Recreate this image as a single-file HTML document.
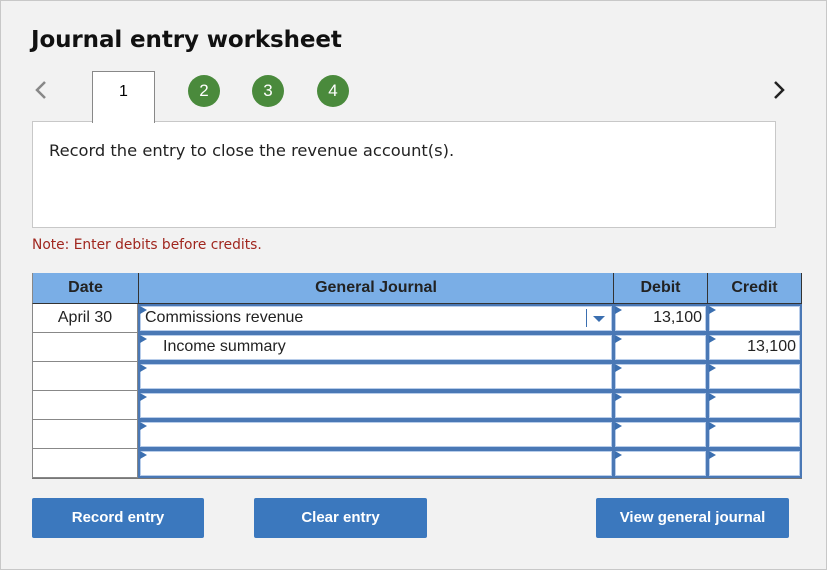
<!DOCTYPE html>
<html><head><style>
*{margin:0;padding:0;box-sizing:border-box}
body{width:827px;height:570px;background:#f2f2f2;font-family:"Liberation Sans",sans-serif;position:relative;overflow:hidden}
.a{position:absolute}
h1{position:absolute;left:31px;top:27px;font-size:23px;font-weight:bold;color:#111;font-family:"DejaVu Sans","Liberation Sans",sans-serif;letter-spacing:-0.1px}
.c{position:absolute;width:32px;height:32px;border-radius:50%;background:#4a8a3c;color:#fff;font-size:17px;text-align:center;line-height:32px;top:75px}
.hd{position:absolute;top:273px;height:31px;background:#7aaee6;font-weight:bold;font-size:16px;color:#222;text-align:center;line-height:30px;border-right:1px solid #333;border-bottom:1px solid #333}
.dc{position:absolute;left:32px;width:106px;height:29px;background:#fff;border:1px solid #888;border-top:none;font-size:16px;text-align:center;line-height:27px;color:#222}
.ic{position:absolute;height:29px;background:#4a78b5;padding:2px}
.ic div{width:100%;height:100%;background:#fff;border:1px solid #b8cdea;font-size:16px;line-height:22px;color:#222;position:relative}
.ic div:before{content:"";position:absolute;left:-1px;top:-1px;border-left:7px solid #3b6fb0;border-top:4px solid transparent;border-bottom:4px solid transparent}
.btn{position:absolute;top:498px;height:40px;background:#3b78be;color:#fff;font-weight:bold;font-size:15px;text-align:center;line-height:40px;border-radius:2px}
</style></head><body>
<div class="a" style="left:0;top:0;width:827px;height:570px;border:1px solid #c8c8c8"></div>
<h1>Journal entry worksheet</h1>
<svg class="a" style="left:34px;top:80px" width="14" height="20"><path d="M11 2 L3 10 L11 18" stroke="#888" stroke-width="2.5" fill="none"/></svg>
<svg class="a" style="left:772px;top:80px" width="14" height="20"><path d="M3 2 L11 10 L3 18" stroke="#222" stroke-width="2.5" fill="none"/></svg>
<div class="a" style="left:92px;top:71px;width:63px;height:52px;background:#fff;border:1px solid #888;border-bottom:none;text-align:center;font-size:16px;line-height:40px;z-index:2">1</div>
<div class="c" style="left:188px">2</div>
<div class="c" style="left:252px">3</div>
<div class="c" style="left:317px">4</div>
<div class="a" style="left:32px;top:121px;width:744px;height:107px;background:#fff;border:1px solid #c8c8c8;font-family:'DejaVu Sans',sans-serif;font-size:16.3px;padding:19px 16px;color:#222">Record the entry to close the revenue account(s).</div>
<div class="a" style="left:32px;top:237px;font-family:'DejaVu Sans',sans-serif;font-size:13.8px;color:#a0261e">Note: Enter debits before credits.</div>
<div class="a" style="left:32px;top:273px;width:770px;height:206px;background:#777"></div>
<div class="hd" style="left:32px;width:107px;border-left:1px solid #888">Date</div>
<div class="hd" style="left:139px;width:475px">General Journal</div>
<div class="hd" style="left:614px;width:94px">Debit</div>
<div class="hd" style="left:708px;width:94px">Credit</div>

<div class="dc" style="top:304px">April 30</div>
<div class="dc" style="top:333px"></div>
<div class="dc" style="top:362px"></div>
<div class="dc" style="top:391px"></div>
<div class="dc" style="top:420px"></div>
<div class="dc" style="top:449px"></div>

<div class="ic" style="left:138px;top:304px;width:476px"><div style="padding-left:4px">Commissions revenue<span style="position:absolute;right:24px;top:2px;height:18px;border-left:1px solid #3b6fb0"></span><span style="position:absolute;right:6px;top:9px;border-top:6px solid #3b6fb0;border-left:6px solid transparent;border-right:6px solid transparent"></span></div></div>
<div class="ic" style="left:613px;top:304px;width:95px"><div style="text-align:right;padding-right:3px">13,100</div></div>
<div class="ic" style="left:707px;top:304px;width:95px"><div></div></div>

<div class="ic" style="left:138px;top:333px;width:476px"><div style="padding-left:22px">Income summary</div></div>
<div class="ic" style="left:613px;top:333px;width:95px"><div></div></div>
<div class="ic" style="left:707px;top:333px;width:95px"><div style="text-align:right;padding-right:3px">13,100</div></div>

<div class="ic" style="left:138px;top:362px;width:476px"><div></div></div>
<div class="ic" style="left:613px;top:362px;width:95px"><div></div></div>
<div class="ic" style="left:707px;top:362px;width:95px"><div></div></div>
<div class="ic" style="left:138px;top:391px;width:476px"><div></div></div>
<div class="ic" style="left:613px;top:391px;width:95px"><div></div></div>
<div class="ic" style="left:707px;top:391px;width:95px"><div></div></div>
<div class="ic" style="left:138px;top:420px;width:476px"><div></div></div>
<div class="ic" style="left:613px;top:420px;width:95px"><div></div></div>
<div class="ic" style="left:707px;top:420px;width:95px"><div></div></div>
<div class="ic" style="left:138px;top:449px;width:476px"><div></div></div>
<div class="ic" style="left:613px;top:449px;width:95px"><div></div></div>
<div class="ic" style="left:707px;top:449px;width:95px"><div></div></div>

<div class="btn" style="left:32px;width:172px">Record entry</div>
<div class="btn" style="left:254px;width:173px">Clear entry</div>
<div class="btn" style="left:596px;width:193px">View general journal</div>
</body></html>
